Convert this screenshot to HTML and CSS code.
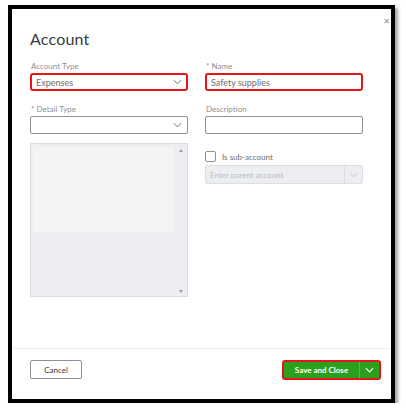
FILE: index.html
```html
<!DOCTYPE html>
<html>
<head>
<meta charset="utf-8">
<link rel="stylesheet" href="styles.css">
</head>
<body>
<div class="frame">
  <div class="dialog">
    <span class="close">&#x2715;</span>
    <div class="content">
      <h1 class="title">Account</h1>
      <div class="grid">
        <div class="col">
          <div class="field">
            <label class="lbl">Account Type</label>
            <div class="input select red"><span class="val">Expenses</span><svg class="chev" viewBox="0 0 10 6"><path d="M1 1l4 4 4-4" fill="none" stroke="#6b6c72" stroke-width="1.1"/></svg></div>
          </div>
          <div class="field">
            <label class="lbl">* Detail Type</label>
            <div class="input select"><span class="val"></span><svg class="chev" viewBox="0 0 10 6"><path d="M1 1l4 4 4-4" fill="none" stroke="#6b6c72" stroke-width="1.1"/></svg></div>
          </div>
          <div class="listbox">
            <div class="listinner">
              <div class="listtop"></div>
            </div>
            <div class="scroll">
              <span class="arr up"></span>
              <span class="arr down"></span>
            </div>
          </div>
        </div>
        <div class="col">
          <div class="field">
            <label class="lbl">* Name</label>
            <div class="input red"><span class="val">Safety supplies</span></div>
          </div>
          <div class="field">
            <label class="lbl">Description</label>
            <div class="input"><span class="val"></span></div>
          </div>
          <div class="subrow">
            <span class="check"></span><span class="sublbl">Is sub-account</span>
          </div>
          <div class="parent">
            <span class="ph">Enter parent account</span>
            <span class="pdrop"><svg class="chev" viewBox="0 0 10 6"><path d="M1 1l4 4 4-4" fill="none" stroke="#c4c6cb" stroke-width="1.1"/></svg></span>
          </div>
        </div>
      </div>
    </div>
    <div class="footer">
      <button class="cancel">Cancel</button>
      <div class="savegroup">
        <button class="save">Save and Close</button>
        <button class="savedrop"><svg class="chev w" viewBox="0 0 10 6"><path d="M1 1l4 4 4-4" fill="none" stroke="#fff" stroke-width="1.3"/></svg></button>
      </div>
    </div>
  </div>
</div>
</body>
</html>
```

FILE: styles.css
```css
* { box-sizing: border-box; }
html, body { margin: 0; padding: 0; background: #fff; }
body { font-family: "Lato", "Open Sans", sans-serif; color: #393a3d; }

.frame {
  margin: 5px 0 0 8px;
  width: 387px;
  height: 398px;
  border: 4px solid #000;
  box-shadow: 3px 3px 3px rgba(0,0,0,0.35);
  background: #fff;
}
.dialog {
  position: relative;
  height: 100%;
  display: flex;
  flex-direction: column;
  overflow: hidden;
}
.close {
  position: absolute;
  right: 1px;
  top: 8px;
  font-size: 8px;
  color: #8d9096;
  font-family: "DejaVu Sans", sans-serif;
}
.content {
  height: 340px;
  padding: 20px 29px 0 18px;
  border-bottom: 1px solid #eceef1;
}
.title {
  margin: 0;
  font-size: 16px;
  line-height: 20px;
  font-weight: 400;
  color: #393a3d;
  letter-spacing: 0.2px;
}
.grid {
  margin-top: 12px;
  display: grid;
  grid-template-columns: 158px 158px;
  column-gap: 17px;
}
.col { display: flex; flex-direction: column; }
.field { display: flex; flex-direction: column; margin-bottom: 13px; }
.lbl {
  font-size: 8px;
  line-height: 10px;
  color: #8d9096;
  margin-bottom: 2px;
  padding-left: 1px;
}
.input {
  height: 18px;
  border: 1px solid #8d9096;
  border-radius: 2px;
  display: flex;
  align-items: center;
  padding: 0 5px;
  font-size: 9px;
  color: #6b6c72;
}
.input.red { border: 2px solid #e8141b; border-radius: 3px; padding: 0 4px; }
.input .val { flex: 1; }
.chev { width: 9px; height: 6px; display: block; }
.listbox {
  margin-top: -4px;
  height: 154px;
  background: #eceef1;
  border: 1px solid #dcdee2;
  display: flex;
  padding: 3px 0 0 2px;
}
.listinner { flex: 1; }
.listtop { height: 85px; background: #f4f4f4; }
.scroll {
  width: 13px;
  display: flex;
  flex-direction: column;
  justify-content: space-between;
  align-items: center;
  padding: 2px 0 3px;
}
.arr { width: 0; height: 0; border-left: 2px solid transparent; border-right: 2px solid transparent; }
.arr.up { border-bottom: 3px solid #9a9ca1; }
.arr.down { border-top: 3px solid #9a9ca1; }
.subrow {
  margin-top: 4px;
  display: flex;
  align-items: center;
  height: 11px;
}
.check {
  width: 11px;
  height: 11px;
  border: 1px solid #8d9096;
  border-radius: 2px;
  margin-right: 6px;
}
.sublbl { font-size: 8px; color: #6b6c72; }
.parent {
  margin-top: 3px;
  height: 19px;
  background: #eceef1;
  border: 1px solid #dcdee2;
  border-radius: 2px;
  display: flex;
  align-items: center;
}
.ph { flex: 1; font-size: 8px; color: #b9bbc0; padding-left: 4px; }
.pdrop {
  width: 18px;
  height: 100%;
  border-left: 1px solid #dcdee2;
  display: flex;
  align-items: center;
  justify-content: center;
}
.footer {
  flex: 1;
  display: flex;
  justify-content: space-between;
  align-items: flex-start;
  padding: 11px 10px 0 18px;
}
button { font-family: inherit; cursor: pointer; }
.cancel {
  width: 52px;
  height: 19px;
  background: #fff;
  border: 1px solid #8d9096;
  border-radius: 2px;
  font-size: 8px;
  color: #393a3d;
  padding: 0;
}
.savegroup {
  display: flex;
  height: 20px;
  border: 2px solid #e8141b;
  border-radius: 3px;
  background: #2ca01c;
}
.save {
  width: 76px;
  background: #2ca01c;
  color: #fff;
  border: 0;
  border-right: 1px solid #54b347;
  font-size: 8px;
  font-weight: 700;
  padding: 0;
}
.savedrop {
  width: 19px;
  background: #2ca01c;
  border: 0;
  display: flex;
  align-items: center;
  justify-content: center;
  padding: 0;
}
```
